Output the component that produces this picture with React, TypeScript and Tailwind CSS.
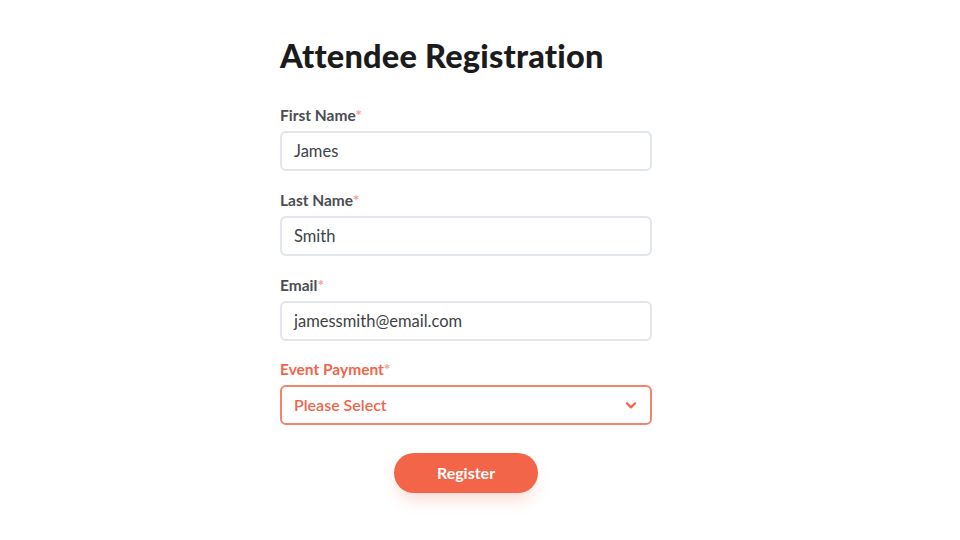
import React from 'react'

const fields = [
  { label: 'First Name', value: 'James' },
  { label: 'Last Name', value: 'Smith' },
  { label: 'Email', value: 'jamessmith@email.com' },
]

export default function App() {
  return (
    <div className="w-[960px] h-[540px] bg-white pl-[280px] font-['Lato',sans-serif]">
      <div className="w-[372px] pt-[37px]">
        <h1 className="text-[32.5px] leading-[38px] font-black text-[#1b1b1b] tracking-[0.2px]">
          Attendee Registration
        </h1>
        <div className="mt-[30px] flex flex-col gap-[19px]">
          {fields.map((f) => (
            <div key={f.label} className="flex flex-col gap-[6px]">
              <label className="text-[15.5px] leading-[20px] font-bold text-[#4a4d52]">
                {f.label}
                <span className="text-[#f4a394]">*</span>
              </label>
              <div className="h-[40px] rounded-[6px] border-2 border-[#e1e5ec] flex items-center px-[12px] text-[16.5px] text-[#3e4248]">
                {f.value}
              </div>
            </div>
          ))}
          <div className="flex flex-col gap-[6px] -mt-[1px]">
            <label className="text-[15.5px] leading-[20px] font-bold text-[#f0654b]">
              Event Payment<span className="text-[#f4a394]">*</span>
            </label>
            <div className="h-[40px] rounded-[6px] border-2 border-[#f3836d] flex items-center justify-between px-[12px] text-[16px] font-semibold text-[#f0654b]">
              <span>Please Select</span>
              <svg width="14" height="14" viewBox="0 0 24 24" fill="none" stroke="#f0654b" strokeWidth="4" strokeLinecap="round" strokeLinejoin="round">
                <path d="M5 9l7 7 7-7" />
              </svg>
            </div>
          </div>
        </div>
        <div className="flex justify-center mt-[28px]">
          <button className="w-[144px] h-[40px] rounded-full bg-[#f26549] text-white text-[16px] font-bold shadow-[0_10px_16px_-4px_rgba(242,101,73,0.25)]">
            Register
          </button>
        </div>
      </div>
    </div>
  )
}
